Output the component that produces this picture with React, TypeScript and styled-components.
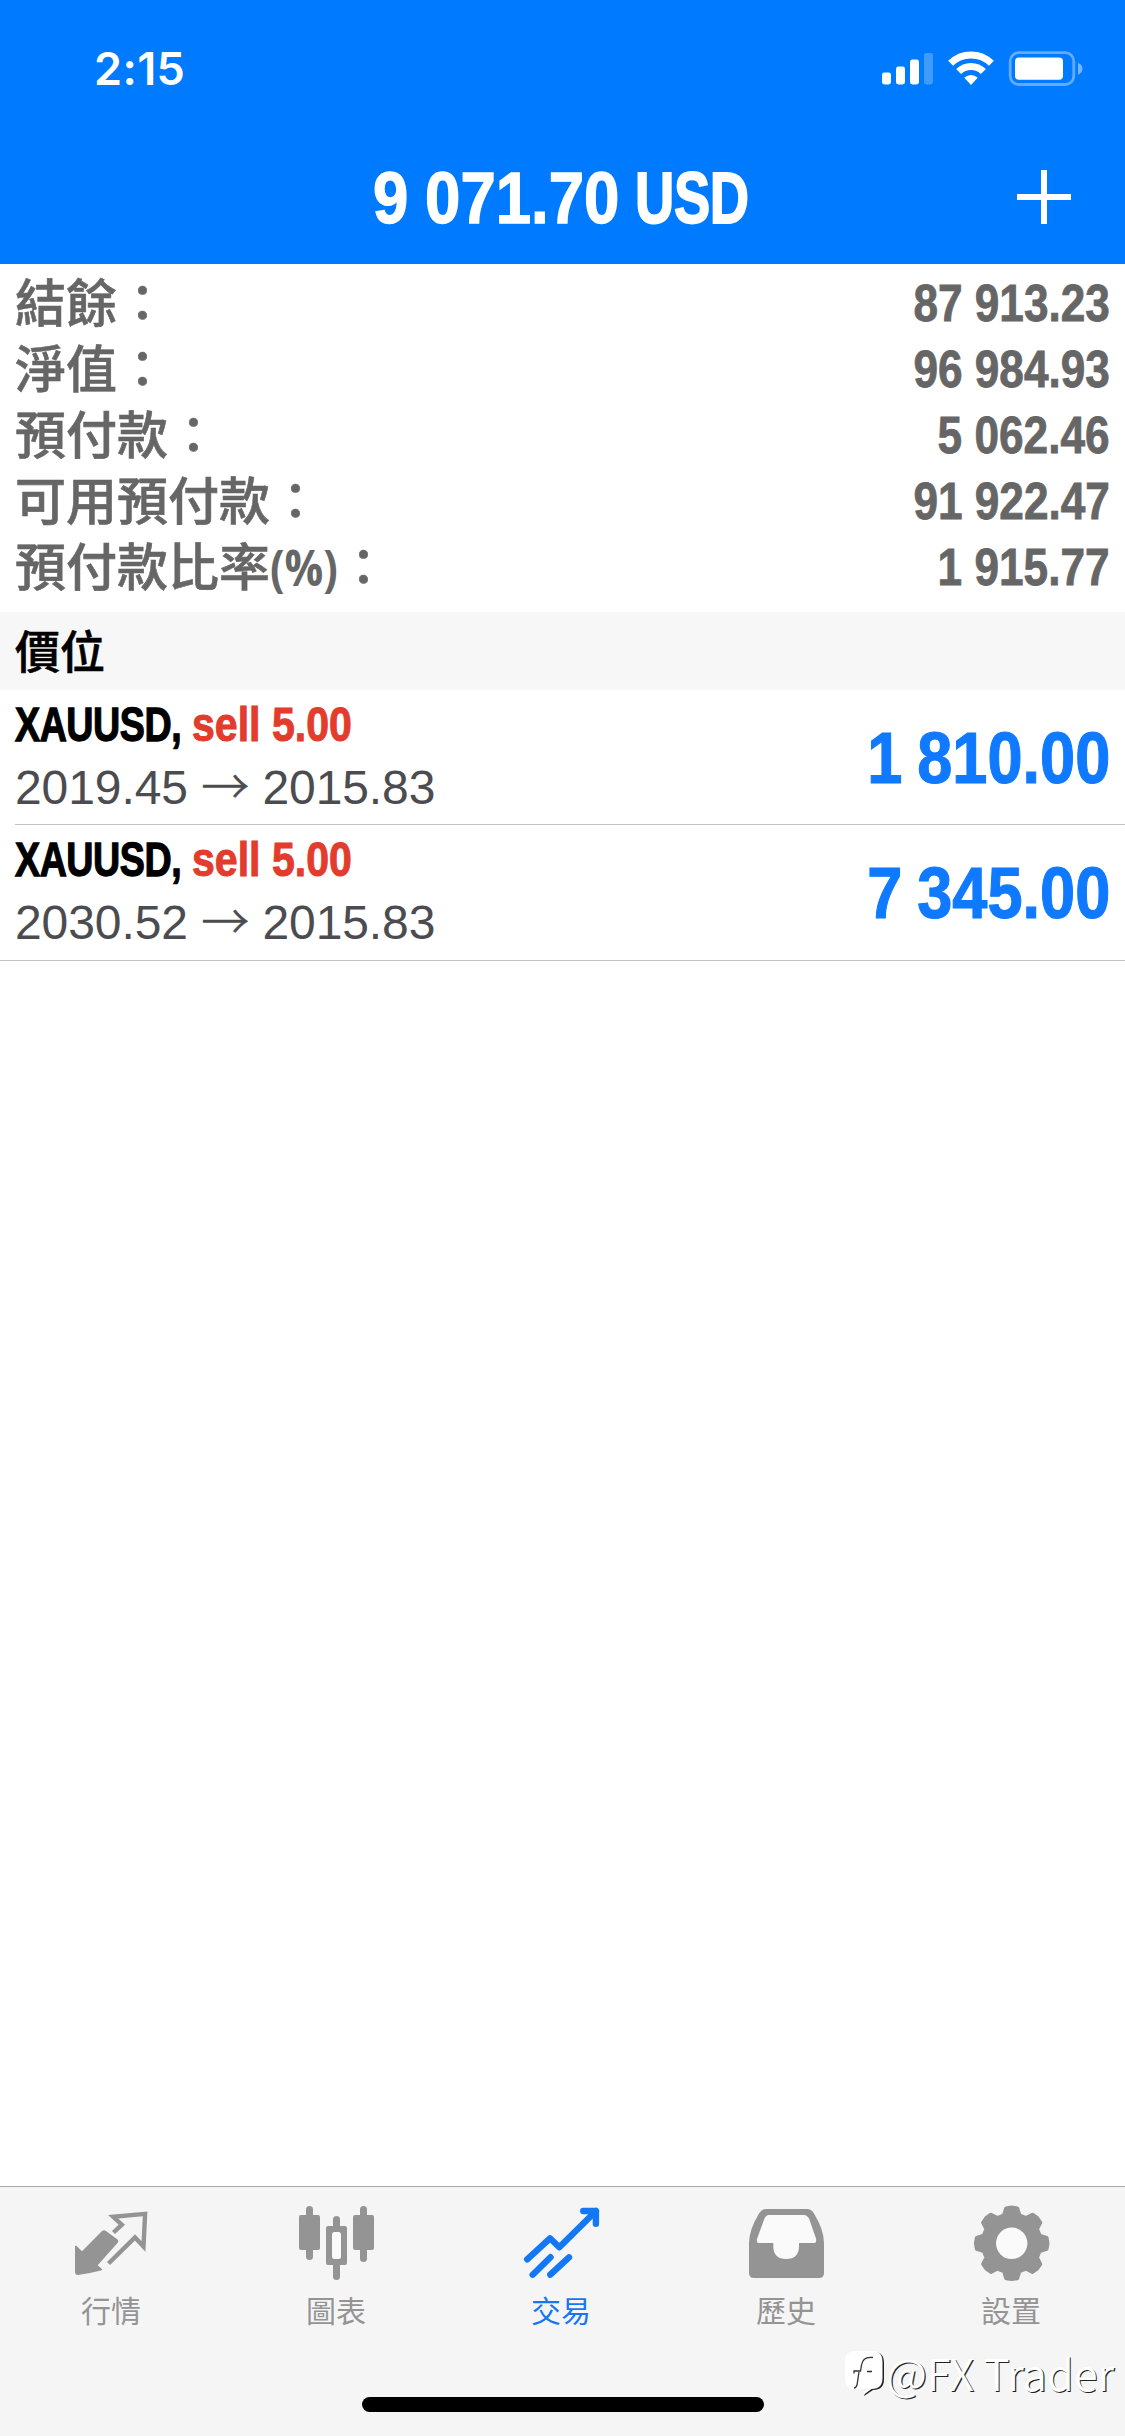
import React from "react";
import styled, { createGlobalStyle } from "styled-components";

const SANS = `"Liberation Sans", "Noto Sans CJK TC", sans-serif`;
const CJK = `"Noto Sans CJK TC", "Liberation Sans", sans-serif`;
const BLUE = "#007aff";

const GlobalStyle = createGlobalStyle`
  * { box-sizing: border-box; }
  body { margin: 0; background: #fff; font-family: ${SANS}; }
`;

const Screen = styled.div`
  position: relative;
  display: flex;
  flex-direction: column;
  width: 1125px;
  height: 2436px;
  overflow: hidden;
  background: #fff;
`;

const Header = styled.header`
  height: 264px;
  background: ${BLUE};
  color: #fff;
`;

const StatusBar = styled.div`
  display: flex;
  justify-content: space-between;
  height: 132px;
  padding: 42px 35px 0 94px;
`;

const Time = styled.div`
  font: 600 45px/54px Inter, sans-serif;
  letter-spacing: 0.4px;
`;

const NavBar = styled.div`
  display: grid;
  grid-template-columns: 150px 1fr 150px;
  align-items: center;
  height: 132px;
`;

/* Bold text squeezed horizontally into a condensed cut. */
const Condensed = styled.span<{
  $size: number;
  $scale: number;
  $spacing?: number;
  $wordSpacing?: number;
  $width?: number;
  $stroke?: number;
  $font?: string;
  $origin?: string;
}>`
  display: inline-block;
  width: ${(p) => (p.$width ? `${p.$width / p.$scale}px` : "auto")};
  margin-right: ${(p) => (p.$width ? `${p.$width - p.$width / p.$scale}px` : "0")};
  font-family: ${(p) => p.$font ?? SANS};
  font-weight: 700;
  font-size: ${(p) => p.$size}px;
  letter-spacing: ${(p) => p.$spacing ?? 0}px;
  word-spacing: ${(p) => p.$wordSpacing ?? 0}px;
  white-space: pre;
  -webkit-text-stroke: ${(p) => p.$stroke ?? 0.8}px currentColor;
  transform: scaleX(${(p) => p.$scale});
  transform-origin: ${(p) => p.$origin ?? "left"} center;
`;

const Title = styled.h1`
  grid-column: 2;
  display: flex;
  justify-content: center;
  margin: 0;
  line-height: 132px;
`;

const AddButton = styled.button`
  display: flex;
  justify-content: center;
  padding: 0 12px 2px 0;
  border: 0;
  background: none;
  color: inherit;
`;

const Summary = styled.dl`
  margin: 0;
  padding: 6px 15px 12px 15px;
  color: #666;
`;

const SummaryRow = styled.div`
  display: flex;
  justify-content: space-between;
  height: 66px;
  line-height: 68px;
`;

const SummaryLabel = styled.dt`
  padding-top: 1px;
  font-family: ${SANS};
  font-size: 51px;
  font-weight: 500;
  -webkit-text-stroke: 0.6px currentColor;
`;

const Unit = styled(Condensed)`
  line-height: 1;
`;

const SummaryValue = styled.dd`
  margin: 0;
`;

const SectionHeader = styled.h2`
  height: 78px;
  margin: 0;
  padding-left: 15px;
  background: #f7f7f7;
  color: #000;
  font: 500 45px/75px ${CJK};
  -webkit-text-stroke: 0.6px currentColor;
`;

const Positions = styled.ul`
  flex: 1;
  margin: 0;
  padding: 0;
  list-style: none;
`;

const Position = styled.li<{ $last: boolean }>`
  display: flex;
  justify-content: space-between;
  height: ${(p) => (p.$last ? 136 : 135)}px;
  margin-left: ${(p) => (p.$last ? 0 : 15)}px;
  padding: 0 15px 0 ${(p) => (p.$last ? 15 : 0)}px;
  border-bottom: 1px solid #c2c2c5;
`;

const PositionInfo = styled.div`
  display: flex;
  flex-direction: column;
`;

const Deal = styled.div`
  display: flex;
  height: 69px;
  line-height: 69px;
`;

const SymbolName = styled.div`
  color: #000;
`;

const Side = styled.div`
  color: #e33b2c;
`;

const Prices = styled.div`
  color: #4c4c50;
  font-size: 48px;
  letter-spacing: -0.08px;
  line-height: 58px;
  white-space: pre;
`;

const Arrow = styled.span`
  font-family: "Noto Sans CJK TC", sans-serif;
  font-weight: 300;
  line-height: 1;
  -webkit-text-stroke: 0.5px currentColor;
`;

const Profit = styled.div`
  color: #0f7aff;
  line-height: 136px;
`;

const TabBar = styled.nav`
  height: 250px;
  border-top: 1px solid #a9a9ab;
  background: #f5f5f5;
`;

const Tabs = styled.div`
  display: grid;
  grid-template-columns: repeat(5, 225px);
`;

const Tab = styled.div<{ $active: boolean }>`
  display: flex;
  flex-direction: column;
  align-items: center;
  padding-top: 13px;
  color: ${(p) => (p.$active ? "#1478f5" : "#949494")};
`;

const TabLabel = styled.span`
  margin: 3px 3px 0 0;
  font: 400 30px/44px ${CJK};
`;

const HomeIndicator = styled.div`
  width: 402px;
  height: 15px;
  margin: 66px auto 0;
  border-radius: 8px;
  background: #000;
`;

const Watermark = styled.div`
  position: absolute;
  right: 11px;
  bottom: 33px;
  display: flex;
  align-items: center;
  color: #fff;
  font: 350 43.5px/60px "Noto Sans CJK TC", sans-serif;
  text-shadow: 1.2px 1.2px 0 #222;
  white-space: pre;
`;

const StatusIcons = () => (
  <svg width="210" height="50" viewBox="880 42.500 210 50" fill="#fff">
    <rect x="882" y="73" width="9" height="12" rx="2.4" />
    <rect x="896" y="67" width="9" height="18" rx="2.4" />
    <rect x="910" y="60" width="9" height="25" rx="2.4" />
    <rect x="924" y="53.5" width="9" height="31.5" rx="2.4" opacity="0.25" />
    <g fill="none" stroke="#fff" strokeWidth="7">
      <path d="M950.6 63.8a29 29 0 0 1 40.8 0" />
      <path d="M958.6 72a17.6 17.6 0 0 1 24.8 0" />
    </g>
    <path d="M964.3 78.2a9.5 9.5 0 0 1 13.4 0l-6.7 7.3z" />
    <rect x="1010.2" y="53.2" width="63.6" height="31.8" rx="8.5" fill="none" stroke="#fff" strokeOpacity="0.38" strokeWidth="2.8" />
    <rect x="1015" y="58" width="48" height="22.3" rx="4" />
    <path d="M1078 63.3c6 2.5 6 9.500 0 12z" opacity="0.45" />
  </svg>
);

const PlusIcon = () => (
  <svg width="54" height="54" viewBox="0 0 54 54" fill="#fff">
    <rect x="24" width="6" height="54" />
    <rect y="24" width="54" height="6" />
  </svg>
);

const QuotesIcon = () => (
  <>
    <path
      d="M6 45.400L12 51.3 32 31q2-1.700 4 0L47.500 39.500q1.500 1.700 0 3.500L27.700 65.3l4.200 3.700q.5 1.200-1 1.600Q20 73.500 8 75q-3 0-3-3V46z"
      fill="currentColor"
    />
    <path
      d="M43.500 32.500L51.800 24.700 43.200 16.800 75.100 13.900 73.500 46.500 65 37.500 38.500 63.500"
      fill="none"
      stroke="currentColor"
      strokeWidth="4.400"
    />
  </>
);

const ChartIcon = () => (
  <g fill="currentColor">
    <rect x="11" y="6" width="7" height="54" rx="3.5" />
    <rect x="4" y="15" width="21" height="35" rx="2" />
    <rect x="65" y="6" width="7" height="56" rx="3.5" />
    <rect x="58" y="15" width="21" height="35" rx="2" />
    <rect x="38" y="16" width="7" height="64" rx="3.5" />
    <rect x="31" y="26" width="21" height="39" rx="2" />
    <rect x="37" y="32" width="9" height="27" rx="2.5" fill="#fafafa" />
  </g>
);

const TradeIcon = () => (
  <path
    d="M7.200 59.300L30 38.300 39.300 47.300 76 11M63.300 11H75.900V23.700M12.700 74.700L30.500 57.200M30.300 74.700L49 57.300"
    fill="none"
    stroke="currentColor"
    strokeWidth="6.400"
    strokeLinecap="round"
    strokeLinejoin="round"
  />
);

const HistoryIcon = () => (
  <>
    <path
      d="M21 9H62Q66.500 9 69 13.500Q79 30 79 43V73Q79 78 74 78H9Q4 78 4 73V43Q4 30 14 13.500Q16.500 9 21 9Z"
      fill="currentColor"
    />
    <path
      d="M24 15H59Q62 15 64 18.500L71 38.500Q72 43 69 43H54V46Q54 59 41.200 59Q28.300 59 28.300 46V43H14Q11 43 12 39L19.500 18.500Q21 15 24 15Z"
      fill="#fafafa"
    />
  </>
);

const gearPoints = Array.from({ length: 8 }, (_, i) => i * 45)
  .flatMap((a) => [
    [a - 15.5, 29],
    [a - 9, 35.3],
    [a, 35.8],
    [a + 9, 35.3],
    [a + 15.5, 29],
  ])
  .map(([deg, r]) => {
    const t = (deg * Math.PI) / 180;
    return `${(41.7 + r * Math.sin(t)).toFixed(2)},${(43.3 - r * Math.cos(t)).toFixed(2)}`;
  })
  .join(" ");

const SettingsIcon = () => (
  <>
    <polygon points={gearPoints} fill="currentColor" stroke="currentColor" strokeWidth="4" strokeLinejoin="round" />
    <circle cx="41.7" cy="43.3" r="15.700" fill="#fafafa" />
  </>
);

const WatermarkLogo = () => (
  <svg width="42" height="50" viewBox="0 0 42 50">
    <path d="M11 4H30Q40 4 40 15V31Q40 42 29 42L20 48 22 42H20Q29 40 31 36Z" fill="#222" />
    <path d="M11 3H28.500Q38.500 3 38.500 14V30Q38.500 41 27.500 41L20 46.500 21 41H11Q1 41 1 31V13Q1 3 11 3Z" fill="#fff" />
    <path d="M29 9.500Q19 8 17.500 17L16.500 23H10V25.500M15 24L13 37Q12 40 10 40M23 23.500H28" fill="none" stroke="#333" strokeWidth="1.300" />
  </svg>
);

const summary = [
  { label: "結餘", value: "87 913.23" },
  { label: "淨值", value: "96 984.93" },
  { label: "預付款", value: "5 062.46" },
  { label: "可用預付款", value: "91 922.47" },
  { label: "預付款比率", unit: "(%)", value: "1 915.77" },
];

const positions = [
  { symbol: "XAUUSD,", side: "sell 5.00", open: "2019.45", current: "2015.83", profit: "1 810.00" },
  { symbol: "XAUUSD,", side: "sell 5.00", open: "2030.52", current: "2015.83", profit: "7 345.00" },
];

const tabs = [
  { label: "行情", Icon: QuotesIcon },
  { label: "圖表", Icon: ChartIcon },
  { label: "交易", Icon: TradeIcon, active: true },
  { label: "歷史", Icon: HistoryIcon },
  { label: "設置", Icon: SettingsIcon },
];

export default function App() {
  return (
    <Screen>
      <GlobalStyle />
      <Header>
        <StatusBar>
          <Time>2:15</Time>
          <StatusIcons />
        </StatusBar>
        <NavBar>
          <Title>
            <Condensed $size={73} $scale={0.87} $width={262} $wordSpacing={-1} $stroke={1.4}>
              9 071.70
            </Condensed>
            <Condensed $size={73} $scale={0.745} $spacing={-0.5} $width={117} $stroke={1.8}>
              USD
            </Condensed>
          </Title>
          <AddButton aria-label="add">
            <PlusIcon />
          </AddButton>
        </NavBar>
      </Header>
      <Summary>
        {summary.map(({ label, unit, value }) => (
          <SummaryRow key={label}>
            <SummaryLabel>
              {label}
              {unit && (
                <Unit $size={50} $scale={0.86} $width={68} $stroke={0} $font={`"Open Sans", sans-serif`}>
                  {unit}
                </Unit>
              )}
              ：
            </SummaryLabel>
            <SummaryValue>
              <Condensed $size={51} $scale={0.866} $origin="right">
                {value}
              </Condensed>
            </SummaryValue>
          </SummaryRow>
        ))}
      </Summary>
      <SectionHeader>價位</SectionHeader>
      <Positions>
        {positions.map((p, i) => (
          <Position key={p.open} $last={i === positions.length - 1}>
            <PositionInfo>
              <Deal>
                <SymbolName>
                  <Condensed $size={49} $scale={0.768} $spacing={-0.6} $width={177} $stroke={1.3}>
                    {p.symbol}
                  </Condensed>
                </SymbolName>
                <Side>
                  <Condensed $size={49} $scale={0.838} $width={160} $stroke={1}>
                    {p.side}
                  </Condensed>
                </Side>
              </Deal>
              <Prices>
                {p.open} <Arrow>→</Arrow> {p.current}
              </Prices>
            </PositionInfo>
            <Profit>
              <Condensed $size={72.5} $scale={0.87} $wordSpacing={-3} $stroke={1.2} $origin="right">
                {p.profit}
              </Condensed>
            </Profit>
          </Position>
        ))}
      </Positions>
      <TabBar>
        <Tabs>
          {tabs.map(({ label, Icon, active }) => (
            <Tab key={label} $active={!!active}>
              <svg width="85" height="84" viewBox="0 0 85 84">
                <Icon />
              </svg>
              <TabLabel>{label}</TabLabel>
            </Tab>
          ))}
        </Tabs>
        <HomeIndicator />
      </TabBar>
      <Watermark>
        <WatermarkLogo />
        @FX Trader
      </Watermark>
    </Screen>
  );
}
